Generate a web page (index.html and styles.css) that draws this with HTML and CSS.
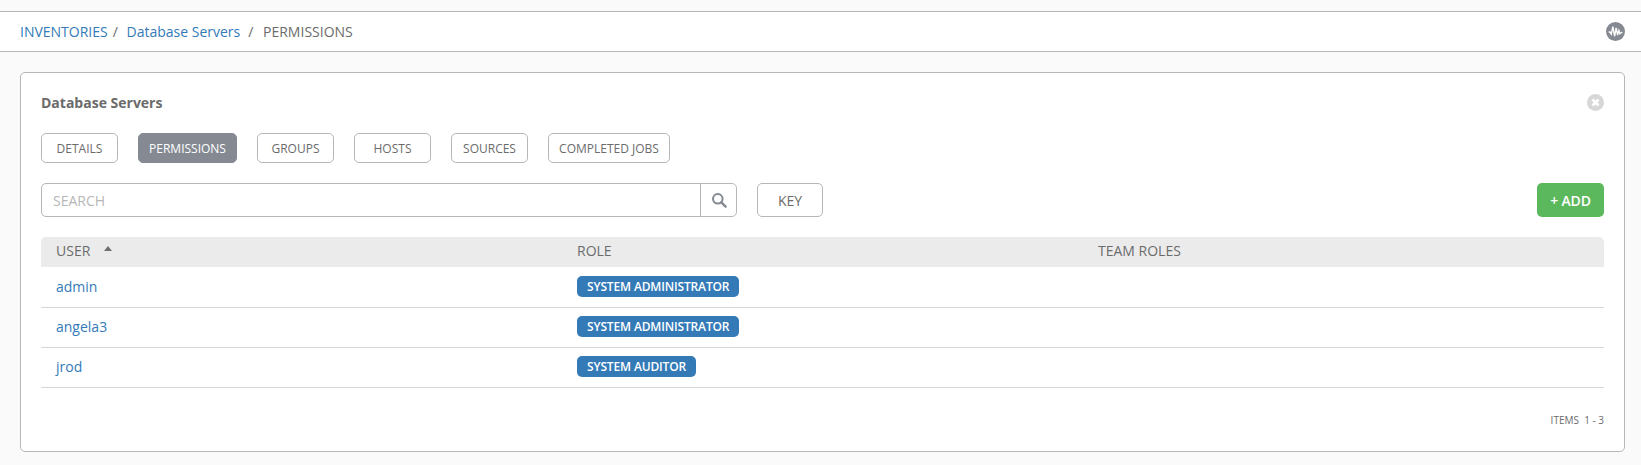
FILE: index.html
```html
<!DOCTYPE html>
<html lang="en">
<head>
<meta charset="UTF-8" />
<title>Permissions</title>
<link rel="stylesheet" href="styles.css">
</head>
<body>

<div class="topbar">
  <div class="crumbs">
    <a href="#">INVENTORIES</a><span class="sep">/</span>
    <a href="#">Database Servers</a><span class="sep sep-last">/</span>
    <span>PERMISSIONS</span>
  </div>
  <svg class="activity" width="19" height="19" viewBox="0 0 18 18">
    <circle cx="9" cy="9" r="9" fill="#848992"/>
    <path d="M2.5 9.5H3.8L5 11.5 6.5 4.5 8.2 13.5 9.6 5.5 11 12.5 12.2 8 13.2 11 15.5 9.5" fill="none" stroke="#fff" stroke-width="1.3"/>
  </svg>
</div>

<div class="panel">
  <div class="panel-head">
    <div class="panel-title">Database Servers</div>
    <svg class="close" width="17" height="17" viewBox="0 0 17 17">
      <circle cx="8.5" cy="8.5" r="8.5" fill="#d7d7d7"/>
      <path d="M5.5 5.5L11.5 11.5M11.5 5.5L5.5 11.5" stroke="#fff" stroke-width="2.8"/>
    </svg>
  </div>

  <div class="tabs">
    <div class="tab">DETAILS</div>
    <div class="tab tab-active">PERMISSIONS</div>
    <div class="tab">GROUPS</div>
    <div class="tab">HOSTS</div>
    <div class="tab">SOURCES</div>
    <div class="tab tab-jobs">COMPLETED JOBS</div>
  </div>

  <div class="toolbar">
    <div class="search">
      <div class="search-input">SEARCH</div>
      <div class="search-btn">
        <svg width="16" height="16" viewBox="0 0 16 16">
          <circle cx="6.8" cy="6.8" r="4.8" fill="none" stroke="#848992" stroke-width="2"/>
          <path d="M10.4 10.4L14.6 14.6" stroke="#848992" stroke-width="2.4" stroke-linecap="round"/>
        </svg>
      </div>
    </div>
    <div class="key">KEY</div>
    <div class="add">+ ADD</div>
  </div>

  <div class="row row-head">
    <div class="cell">USER <span class="sort"></span></div>
    <div class="cell">ROLE</div>
    <div class="cell">TEAM ROLES</div>
  </div>
  <div class="row">
    <div class="cell"><a href="#">admin</a></div>
    <div class="cell"><span class="role">SYSTEM ADMINISTRATOR</span></div>
    <div class="cell"></div>
  </div>
  <div class="row">
    <div class="cell"><a href="#">angela3</a></div>
    <div class="cell"><span class="role">SYSTEM ADMINISTRATOR</span></div>
    <div class="cell"></div>
  </div>
  <div class="row">
    <div class="cell"><a href="#">jrod</a></div>
    <div class="cell"><span class="role">SYSTEM AUDITOR</span></div>
    <div class="cell"></div>
  </div>

  <div class="pager">ITEMS&nbsp; 1 - 3</div>
</div>

</body>
</html>
```

FILE: styles.css
```css
* {
  box-sizing: border-box;
}

body {
  margin: 0;
  height: 465px;
  overflow: hidden;
  background: #fafafa;
  font-family: "Open Sans", sans-serif;
  color: #6b6b6b;
  padding-top: 11px;
}

a {
  color: #337ab7;
  text-decoration: none;
}

.topbar {
  height: 41px;
  background: #fff;
  border-top: 1px solid #b7b7b7;
  border-bottom: 1px solid #b7b7b7;
  padding: 0 16px 0 20px;
  display: flex;
  align-items: center;
  justify-content: space-between;
  font-size: 14px;
}

.sep {
  margin: 0 5px 0 5px;
}

.sep-last {
  margin: 0 6px 0 8px;
}

.panel {
  margin: 20px 16px 0 20px;
  height: 380px;
  background: #fff;
  border: 1px solid #b7b7b7;
  border-radius: 5px;
  padding: 20px;
}

.panel-head {
  display: flex;
  justify-content: space-between;
  align-items: center;
  height: 19px;
  margin-bottom: 21px;
}

.panel-title {
  font-size: 14px;
  font-weight: 700;
}

.tabs {
  display: flex;
  gap: 20px;
  margin-bottom: 20px;
}

.tab {
  width: 77px;
  height: 30px;
  border: 1px solid #b7b7b7;
  border-radius: 5px;
  font-size: 12px;
  display: flex;
  align-items: center;
  justify-content: center;
}

.tab-active {
  width: 99px;
  background: #848992;
  border-color: #848992;
  color: #fff;
}

.tab-jobs {
  width: 122px;
}

.toolbar {
  display: flex;
  height: 34px;
  margin-bottom: 20px;
}

.search {
  width: 696px;
  display: flex;
  border: 1px solid #b7b7b7;
  border-radius: 5px;
}

.search-input {
  flex: 1;
  padding-left: 11px;
  font-size: 14px;
  line-height: 33px;
  color: #b7b7b7;
}

.search-btn {
  width: 36px;
  border-left: 1px solid #b7b7b7;
  display: flex;
  align-items: center;
  justify-content: center;
}

.key {
  width: 66px;
  margin-left: 20px;
  border: 1px solid #b7b7b7;
  border-radius: 5px;
  font-size: 14px;
  display: flex;
  align-items: center;
  justify-content: center;
}

.add {
  width: 67px;
  margin-left: auto;
  background: #5cb85c;
  border-radius: 5px;
  color: #fff;
  font-size: 14px;
  font-weight: 600;
  letter-spacing: -0.2px;
  display: flex;
  align-items: center;
  justify-content: center;
}

.row {
  display: grid;
  grid-template-columns: 521px 521px 1fr;
  align-items: center;
  height: 40px;
  padding-bottom: 2px;
  border-bottom: 1px solid #d7d7d7;
  font-size: 14px;
}

.row-head {
  height: 30px;
  padding-bottom: 2px;
  background: #ebebeb;
  border-bottom: 0;
  border-radius: 5px 5px 0 0;
  line-height: 20px;
}

.row-head + .row {
  height: 41px;
}

.cell {
  padding-left: 15px;
}

.sort {
  display: inline-block;
  width: 0;
  height: 0;
  margin-left: 10px;
  vertical-align: 5px;
  border-left: 4.5px solid transparent;
  border-right: 4.5px solid transparent;
  border-bottom: 5px solid #707070;
}

.role {
  display: inline-block;
  height: 21px;
  padding: 0 10px;
  background: #337ab7;
  border-radius: 5px;
  color: #fff;
  font-size: 12px;
  font-weight: 600;
  letter-spacing: -0.15px;
  line-height: 21px;
  vertical-align: middle;
}

.pager {
  margin-top: 25px;
  text-align: right;
  font-size: 10px;
  line-height: 14px;
}
```
